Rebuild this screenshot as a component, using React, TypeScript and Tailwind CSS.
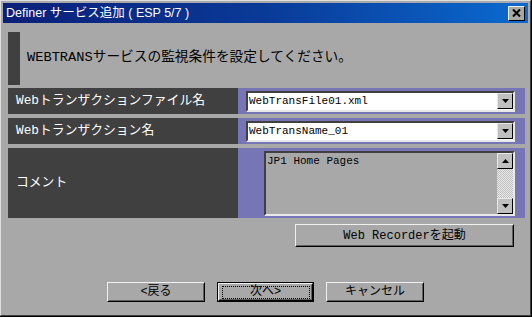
const jp = "font-['Liberation_Mono','Noto_Sans_CJK_JP',monospace]";
const ui = "font-['Liberation_Sans','Noto_Sans_CJK_JP',sans-serif]";

function DownArrow() {
  return (
    <svg width="7" height="4" viewBox="0 0 7 4" aria-hidden="true">
      <path d="M0 0h7L3.5 4z" fill="#000" />
    </svg>
  );
}

function UpArrow() {
  return (
    <svg width="7" height="4" viewBox="0 0 7 4" aria-hidden="true">
      <path d="M0 4h7L3.5 0z" fill="#000" />
    </svg>
  );
}

function ScrollBtn({ children }: { children: React.ReactNode }) {
  return (
    <div className="flex h-[16px] w-[16px] items-center justify-center border border-t-[#e8e8e8] border-l-[#e8e8e8] border-r-[#000] border-b-[#000] bg-[#c0c0c0]">
      {children}
    </div>
  );
}

function Combo({ value }: { value: string }) {
  return (
    <div className="flex h-[21px] flex-1 items-center border-2 border-t-[#404040] border-l-[#404040] border-r-[#e8e8e8] border-b-[#e8e8e8] bg-white">
      <span className={`${jp} flex-1 pl-[1px] text-[11px] leading-none text-black`}>{value}</span>
      <ScrollBtn>
        <DownArrow />
      </ScrollBtn>
    </div>
  );
}

function Row({ label, children, tall }: { label: string; children: React.ReactNode; tall?: boolean }) {
  return (
    <div className={`flex ${tall ? "h-[70px]" : "h-[26px]"}`}>
      <div className={`${jp} flex w-[230px] items-center bg-[#404040] pl-[8px] text-[12.8px] text-white`}>{label}</div>
      <div className="flex flex-1 items-center bg-[#7676b6] pl-[8px] pr-[10px]">{children}</div>
    </div>
  );
}

function Button({ label, focused, className }: { label: string; focused?: boolean; className?: string }) {
  return (
    <div
      className={`${jp} flex items-center justify-center bg-[#a8a8a8] text-[12px] text-black ${
        focused ? "border border-black" : ""
      } ${className ?? ""}`}
    >
      <div className="flex h-full w-full items-center justify-center border border-t-[#f0f0f0] border-l-[#f0f0f0] border-r-[#000] border-b-[#000]">
        <div className="flex h-full w-full items-center justify-center border border-transparent border-r-[#606060] border-b-[#606060]">
          {focused ? (
            <span className="flex h-[13px] w-[88px] items-center justify-center border border-dotted border-black">
              {label}
            </span>
          ) : (
            label
          )}
        </div>
      </div>
    </div>
  );
}

export default function App() {
  return (
    <div className="h-[317px] w-[532px] overflow-hidden bg-black">
      <div className="flex h-[316px] w-[531px] flex-col border border-t-[#e0e0e0] border-l-[#e0e0e0] border-r-[#404040] border-b-[#404040] bg-[#a8a8a8] p-[2px]">
        {/* title bar */}
        <div className="flex h-[20px] items-center justify-between bg-gradient-to-r from-[#0a1f78] via-[#0a3a98] to-[#0b6ad0] pl-[3px] pr-[3px]">
          <span className={`${ui} text-[12.5px] leading-none text-white`}>Definer サービス追加 ( ESP 5/7 )</span>
          <div className="flex h-[15px] w-[17px] items-center justify-center border border-t-[#f0f0f0] border-l-[#f0f0f0] border-r-[#000] border-b-[#000] bg-[#a8a8a8]">
            <svg width="9" height="8" viewBox="0 0 9 8" aria-hidden="true">
              <path d="M1 0.5L8 7.5M8 0.5L1 7.5" stroke="#000" strokeWidth="2" />
            </svg>
          </div>
        </div>

        <div className="flex flex-1 flex-col px-[5px] pt-[9px]">
          {/* header */}
          <div className="flex h-[53px] items-center">
            <div className="h-full w-[12px] bg-[#404040]" />
            <span className={`${jp} pl-[7px] text-[13.7px] text-black`}>
              WEBTRANSサービスの監視条件を設定してください。
            </span>
          </div>

          <div className="mt-[3px] flex w-[517px] flex-col gap-[4px]">
            <Row label="Webトランザクションファイル名">
              <Combo value="WebTransFile01.xml" />
            </Row>
            <Row label="Webトランザクション名">
              <Combo value="WebTransName_01" />
            </Row>
            <Row label="コメント" tall>
              <div className="ml-[18px] flex h-[65px] flex-1 border-2 border-t-[#404040] border-l-[#404040] border-r-[#e8e8e8] border-b-[#e8e8e8] bg-[#a8a8a8]">
                <span className={`${jp} flex-1 pl-[1px] pt-[1px] text-[11px] leading-[14px] text-black`}>
                  JP1 Home Pages
                </span>
                <div className="flex flex-col">
                  <ScrollBtn>
                    <UpArrow />
                  </ScrollBtn>
                  <div className="w-[16px] flex-1 bg-[repeating-conic-gradient(#e8e8e8_0_25%,#c0c0c0_0_50%)] bg-[length:2px_2px]" />
                  <ScrollBtn>
                    <DownArrow />
                  </ScrollBtn>
                </div>
              </div>
            </Row>
          </div>

          <div className="mt-[6px] flex w-[506px] justify-end">
            <Button label="Web Recorderを起動" className="h-[23px] w-[219px]" />
          </div>

          <div className="mt-[35px] flex justify-center gap-[12px]">
            <Button label="<戻る" className="h-[20px] w-[98px]" />
            <Button label="次へ>" focused className="h-[20px] w-[97px]" />
            <Button label="キャンセル" className="h-[20px] w-[98px]" />
          </div>
        </div>
      </div>
    </div>
  );
}
